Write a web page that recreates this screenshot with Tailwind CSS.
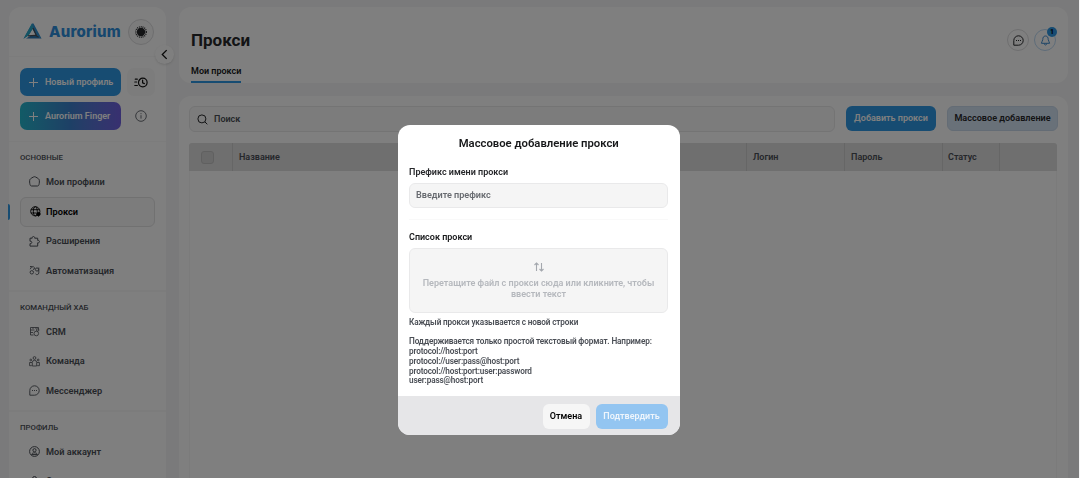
<!DOCTYPE html>
<html lang="ru">
<head>
    <meta charset="UTF-8">
    <meta name="viewport" content="width=device-width, initial-scale=1.0">
    <title>Aurorium - Прокси</title>
    <script src="https://cdn.jsdelivr.net/npm/@tailwindcss/browser@4"></script>
</head>
<body class="h-[478px] overflow-hidden bg-[#f5f5f6] font-['Roboto',sans-serif] text-[9px] font-semibold text-[#4b4f56]">

    <div class="flex h-[478px] overflow-hidden pl-[9px] pt-[7px]">

        <!-- Sidebar -->
        <aside class="relative h-[500px] w-[157px] shrink-0 rounded-t-[12px] bg-white">
            <div class="flex h-[50px] items-center border-b border-[#f8f8f9] pl-[14px] pr-3">
                <svg class="h-[17px] w-[19px] shrink-0" viewBox="0 0 19 17" fill="none">
                    <path d="M9 .5 H10.5 L18.5 15.5 L13.5 13.5 L9.3 5.8 L5.8 12 L.5 15.8 Z" fill="#2f8fd0"/>
                    <path d="M9 .5 L.5 15.8 L5.5 12.5 L10.3 5 Z" fill="#29a9c8"/>
                    <path d="M3 15.6 L8 12.6 L12.3 12 L18.5 15.6 Z" fill="#2a78b5"/>
                    <path d="M10 5 L13.5 12.8 M5 12.8 L12 12.3 L15.5 14" stroke="#4b4f56" stroke-width="1.2"/>
                </svg>
                <span class="ml-[7px] pt-[2px] font-['Inter',sans-serif] text-[15px] font-extrabold tracking-[.2px] text-[#2f8fdc]">Aurorium</span>
                <div class="ml-auto flex size-[26px] shrink-0 items-center justify-center rounded-full border border-[#dcdcde] bg-[#f8f8f8]">
                    <svg class="size-[14px]" viewBox="0 0 16 16" fill="none">
                        <circle cx="8" cy="8" r="4.8" fill="#27282b"/>
                        <circle cx="8" cy="8" r="6" stroke="#27282b" stroke-width="1.6" stroke-dasharray="1 1.1"/>
                    </svg>
                </div>
            </div>

            <div class="absolute left-[146px] top-[38px] flex size-[19px] items-center justify-center rounded-full bg-white shadow-sm">
                <svg class="-ml-px h-[11px] w-[7px]" viewBox="0 0 8 12" fill="none" stroke="#111" stroke-width="1.5"><path d="M6.5 1 1.5 6l5 5"/></svg>
            </div>

            <div class="grid grid-cols-[101px_28px] gap-x-1.5 gap-y-1.5 border-b border-[#f8f8f9] px-[11px] pb-[11px] pt-[11px]">
                <button class="flex h-[28px] items-center rounded-[7px] bg-[#2f98e4] pl-[9px] text-[9px] whitespace-nowrap text-white">
                    <svg class="mr-[7px] size-[9px]" viewBox="0 0 9 9" stroke="white"><path d="M4.5 0v9M0 4.5h9"/></svg><span class="pt-px">Новый профиль</span>
                </button>
                <button class="flex h-[28px] items-center justify-center rounded-[7px] bg-[#f8f8f8]">
                    <svg class="h-[11px] w-[14px]" viewBox="0 0 14 11" fill="none" stroke="#111" stroke-width="1.2" stroke-linecap="round"><circle cx="8.8" cy="5.5" r="4.3"/><path d="M8.6 3v2.8l1.8.8M1.3 2.2h2M.8 5h1.8M.8 8.5h2.6"/></svg>
                </button>
                <button class="flex h-[28px] items-center rounded-[7px] bg-linear-to-r from-[#23b6cd] via-[#3b80cc] to-[#7060e0] pl-[9px] text-[9px] whitespace-nowrap text-white">
                    <svg class="mr-[7px] size-[9px]" viewBox="0 0 9 9" stroke="white"><path d="M4.5 0v9M0 4.5h9"/></svg><span class="pt-px">Aurorium Finger</span>
                </button>
                <div class="flex items-center justify-center">
                    <svg class="size-[12px]" viewBox="0 0 12 12" fill="none" stroke="#6b6f76"><circle cx="6" cy="6" r="5.3"/><path d="M6 5.2v3.4M6 3.2v1"/></svg>
                </div>
            </div>

            <nav class="text-[9.2px]">
                <section class="h-[150px] border-b-2 border-[#f8f8f9] px-[11px] pt-[9px]">
                    <h2 class="h-[16px] text-[7.8px] leading-[13px] font-medium">ОСНОВНЫЕ</h2>
                    <a class="flex h-[29.5px] items-center gap-[6px] pl-[9px]">
                        <svg class="size-[11px]" viewBox="0 0 11 11" fill="none" stroke="currentColor"><path d="M5.5.7C6.5.7 10 2.8 10.2 3.7c.3 1.1.2 3.5-.2 4.8-.2 1-.8 1.5-1.6 1.500H2.600C1.800 10 1.200 9.500 1 8.500.6 7.200.5 4.800.8 3.700 1 2.800 4.500.7 5.500.7Z"/></svg>Мои профили
                    </a>
                    <a class="relative flex h-[30px] w-[135px] items-center gap-[5px] rounded-[6px] border border-[#e2e2e3] bg-[#f8f8f8] pl-[9px] text-black">
                        <span class="absolute -left-[13px] top-[6px] h-[16px] w-[2px] rounded-r bg-[#2f98e4]"></span>
                        <svg class="size-[11px]" viewBox="0 0 11 11" fill="none" stroke="currentColor" stroke-width=".9"><circle cx="5.3" cy="5.3" r="4.6"/><ellipse cx="5.3" cy="5.3" rx="2" ry="4.6"/><path d="M1 3.7h8.7M1 7h5"/><circle cx="8.5" cy="8" r="1.7" fill="currentColor"/><path d="M8.5 8v2.5"/></svg>Прокси
                    </a>
                    <a class="flex h-[29px] items-center gap-[6px] pl-[9px]">
                        <svg class="size-[11px]" viewBox="0 0 11 11" fill="none" stroke="currentColor"><path d="M1 2.2h2.2c-.2-1.1.4-1.7 1.2-1.7s1.5.6 1.3 1.7h3v2.2c1-.2 1.8.3 1.8 1.2s-.8 1.4-1.8 1.2v3.3H1V7.6c1.2.2 1.8-.4 1.8-1.2S2.2 5.1 1 5.3Z"/></svg>Расширения
                    </a>
                    <a class="flex h-[30px] items-center gap-[6px] pl-[9px]">
                        <svg class="size-[11px]" viewBox="0 0 11 11" fill="none" stroke="currentColor" stroke-width=".9"><path d="M1 1.500h1.800L1.200 4.200M4 4.500a1.400 1.400 0 1 0-1-2.400"/><circle cx="2.800" cy="7.300" r="1.700"/><circle cx="8" cy="4.500" r="1.600"/><path d="M9.800 2.500v5.300a1.800 1.800 0 0 1-3.300 1"/></svg>Автоматизация
                    </a>
                </section>

                <section class="h-[120px] border-b-2 border-[#f8f8f9] px-[11px] pt-[9px]">
                    <h2 class="h-[16px] text-[7.8px] leading-[13px] font-medium">КОМАНДНЫЙ ХАБ</h2>
                    <a class="flex h-[29.5px] items-center gap-[6px] pl-[9px]">
                        <svg class="size-[11px]" viewBox="0 0 11 11" fill="none" stroke="currentColor" stroke-width=".8"><path d="M4.5 9H1.5V1.5h8v2M1.5 4h4M1.5 6.5h2.5M4 1.5V3M7 1.5V3"/><circle cx="7.3" cy="7.5" r="2.3"/><circle cx="8.7" cy="4" r="1.2"/></svg>CRM
                    </a>
                    <a class="flex h-[29.5px] items-center gap-[6px] pl-[9px]">
                        <svg class="size-[11px]" viewBox="0 0 11 11" fill="none" stroke="currentColor" stroke-width=".8"><circle cx="5.5" cy="2" r="1.4"/><circle cx="1.8" cy="4" r=".9"/><circle cx="9.2" cy="4" r=".9"/><path d="M3.3 10V6.5a2.2 2.2 0 0 1 4.4 0V10ZM3 6.5H.6v3.2h2.2M8 6.5h2.4v3.2H8.2"/></svg>Команда
                    </a>
                    <a class="flex h-[29.5px] items-center gap-[6px] pl-[9px]">
                        <svg class="size-[11px]" viewBox="0 0 11 11" fill="none" stroke="currentColor" stroke-width=".9"><path d="M.8 10.2V5.5a4.7 4.7 0 1 1 4.7 4.7Z"/><path d="M3 5.5h1M5 5.5h1M7 5.5h1"/></svg>Мессенджер
                    </a>
                </section>

                <section class="px-[11px] pt-[9px]">
                    <h2 class="h-[16px] text-[7.8px] leading-[13px] font-medium">ПРОФИЛЬ</h2>
                    <a class="flex h-[29.5px] items-center gap-[6px] pl-[9px]">
                        <svg class="size-[11px]" viewBox="0 0 11 11" fill="none" stroke="currentColor"><circle cx="5.5" cy="5.5" r="4.9"/><circle cx="5.5" cy="4.2" r="1.6"/><path d="M2.7 8.6c.3-1.3 1.3-1.8 2.8-1.8s2.5.5 2.8 1.8Z"/></svg>Мой аккаунт
                    </a>
                    <a class="flex h-[29.5px] items-center gap-[6px] pl-[9px]">
                        <svg class="size-[11px]" viewBox="0 0 11 11" fill="none" stroke="currentColor"><path d="M3.5 4V2.5a2 2 0 0 1 4 0V4M1.5 4h8v6h-8Z"/></svg>Оплата
                    </a>
                </section>
            </nav>
        </aside>

        <!-- Page -->
        <div class="ml-[13px] flex w-[889px] flex-col gap-[13px]">
            <header class="flex h-[76px] shrink-0 justify-between rounded-[12px] bg-white pl-3 pr-3">
                <div class="flex flex-col items-start">
                    <h1 class="mt-[21px] text-[17px] leading-[24px] font-bold text-[#27282b]">Прокси</h1>
                    <div class="mt-[11px] h-[20px] border-b-2 border-[#2f98e4] text-[9px] leading-[16px] text-[#18191b]">Мои прокси</div>
                </div>
                <div class="mt-[22px] flex gap-[5px]">
                    <div class="flex size-[22px] items-center justify-center rounded-full border border-[#dededf]">
                        <svg class="size-[11px]" viewBox="0 0 11 11" fill="none" stroke="#27282b"><path d="M.8 10.2V5.5a4.7 4.7 0 1 1 4.7 4.7Z"/><path d="M3 5.5h1M5 5.5h1M7 5.5h1"/></svg>
                    </div>
                    <div class="relative flex size-[22px] items-center justify-center rounded-full border border-[#bcd8f2]">
                        <svg class="size-[11px]" viewBox="0 0 11 11" fill="none" stroke="#3f8cd0"><path d="M5.5 1C3.3 1 2.8 2.8 2.8 4.5 2.8 6 1.4 6.8 1.4 8.3h8.2c0-1.5-1.4-2.3-1.4-3.8C8.2 2.8 7.7 1 5.5 1ZM4.2 8.5c.2 2 2.4 2 2.6 0"/></svg>
                        <span class="absolute -right-[2px] -top-[3px] flex size-[10px] items-center justify-center rounded-full bg-[#2f98e4] text-[7px] font-bold text-black">1</span>
                    </div>
                </div>
            </header>

            <main class="h-[400px] shrink-0 rounded-t-[12px] bg-white px-[10px] pt-[10px]">
                <div class="flex h-[26px]">
                    <div class="flex w-[646px] items-center rounded-[6px] border border-[#e8e8e9] bg-[#f9f9f9] pl-[7px] text-[9px]">
                        <svg class="mr-[6px] size-[11px]" viewBox="0 0 11 11" fill="none" stroke="#27282b"><circle cx="4.9" cy="4.9" r="4"/><path d="m7.8 7.8 2.5 2.5"/></svg><span class="pt-px">Поиск</span>
                    </div>
                    <button class="ml-[11px] h-[25px] w-[90px] rounded-[6px] bg-[#2f98e4] pt-px text-[9px] whitespace-nowrap text-white">Добавить прокси</button>
                    <button class="ml-[11px] h-[25px] w-[111px] rounded-[6px] border border-[#c8d8ea] bg-[#d3e2f3] pt-px text-[9.1px] whitespace-nowrap text-[#27282b]">Массовое добавление</button>
                </div>
                <div class="mt-[11px] h-[340px] w-[868px] rounded-t-[4px] border-x border-[#f6f6f6]">
                    <div class="-mx-px grid h-[28px] grid-cols-[44px_514px_98px_98px_57px_57px] rounded-t-[3px] bg-[#dedede] leading-[28px]">
                        <div class="flex items-center border-r border-[#cdcdcd] pl-[12px]"><span class="size-[13px] rounded-[3px] border border-[#c0c0c0] bg-[#d3d3d3]"></span></div>
                        <div class="border-r border-[#cdcdcd] pl-[6px]">Название</div>
                        <div class="border-r border-[#cdcdcd] pl-[6px]">Логин</div>
                        <div class="border-r border-[#cdcdcd] pl-[6px]">Пароль</div>
                        <div class="border-r border-[#cdcdcd] pl-[5px]">Статус</div>
                        <div></div>
                    </div>
                </div>
            </main>
        </div>
    </div>

    <!-- Modal -->
    <div class="fixed inset-y-0 left-0 w-[1079px] bg-black/50 pl-[397.5px] pt-[125px]">
        <div class="h-[310px] w-[282px] overflow-hidden rounded-[12px] bg-white">
            <div class="h-[271px] pl-[11.5px] pr-[11px] pt-[11px]">
                <h2 class="text-center text-[11.3px] leading-[16px] text-[#18191b]">Массовое добавление прокси</h2>
                <label class="mt-[14px] block leading-[12px] text-[#27282b]">Префикс имени прокси</label>
                <div class="mt-[5px] h-[25px] w-[259px] rounded-[6px] border border-[#e9e9ea] bg-[#f5f5f5] pl-[6px] text-[9.1px] leading-[23px] text-[#686b70]">Введите префикс</div>
                <div class="mt-[11px] w-[259px] border-t border-[#f9f9f9]"></div>
                <label class="mt-[11px] block leading-[12px] text-[#18191b]">Список прокси</label>
                <div class="mt-[5px] flex h-[65px] w-[259px] flex-col items-center rounded-[6px] border border-[#e9e9ea] bg-[#f5f5f5] pt-[13px] text-center text-[9.04px] leading-[11px] text-[#b5b8bd]">
                    <svg class="mb-[6px] h-[10px] w-[10px] shrink-0" viewBox="0 0 10 10" fill="none" stroke="#a4a8ae" stroke-width="1.1"><path d="M2.5 9V1M.5 3l2-2 2 2M7.5 1v8M5.5 7l2 2 2-2"/></svg>
                    <p class="whitespace-nowrap">Перетащите файл с прокси сюда или кликните, чтобы<br>ввести текст</p>
                </div>
                <div class="mt-[5px] text-[8.2px] leading-[9.7px] tracking-[-.14px] whitespace-nowrap">
                    <p>Каждый прокси указывается с новой строки</p>
                    <p class="mt-[9.7px]">Поддерживается только простой текстовый формат. Например:</p>
                    <p>protocol://host:port</p>
                    <p>protocol://user:pass@host:port</p>
                    <p>protocol://host:port:user:password</p>
                    <p>user:pass@host:port</p>
                </div>
            </div>
            <div class="flex h-[39px] justify-end gap-[6px] bg-[#e6e6e8] pr-[12px] pt-[7.5px]">
                <button class="h-[25px] w-[47px] rounded-[6px] bg-[#f6f6f6] pt-px text-[9px] text-black">Отмена</button>
                <button class="h-[25px] w-[72px] rounded-[6px] bg-[#93c5f1] pt-px text-[9px] text-[#eef5fc]">Подтвердить</button>
            </div>
        </div>
    </div>

</body>
</html>
